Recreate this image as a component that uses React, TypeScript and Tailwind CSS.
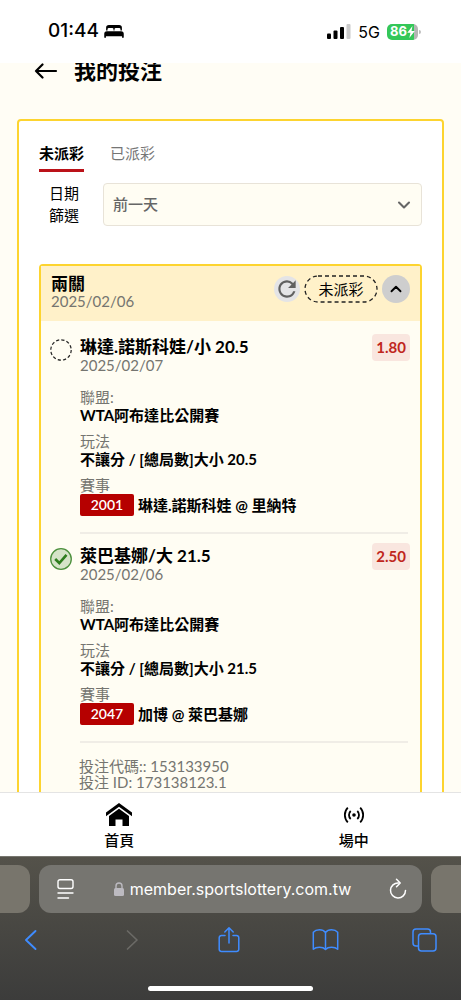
import React, { useState } from 'react';
import { ChevronDown, ChevronUp } from 'lucide-react';
import { MdRefresh } from 'react-icons/md';

interface Pick {
  title: string;
  date: string;
  odds: string;
  won: boolean;
  league: string;
  market: string;
  code: string;
  match: string;
}

const PICKS: Pick[] = [
  {
    title: '琳達.諾斯科娃/小 20.5',
    date: '2025/02/07',
    odds: '1.80',
    won: false,
    league: 'WTA阿布達比公開賽',
    market: '不讓分 / [總局數]大小 20.5',
    code: '2001',
    match: '琳達.諾斯科娃 @ 里納特',
  },
  {
    title: '萊巴基娜/大 21.5',
    date: '2025/02/06',
    odds: '2.50',
    won: true,
    league: 'WTA阿布達比公開賽',
    market: '不讓分 / [總局數]大小 21.5',
    code: '2047',
    match: '加博 @ 萊巴基娜',
  },
];

function StatusBar() {
  return (
    <div className="flex h-[63px] shrink-0 items-center justify-between bg-white pr-10 pl-12 font-[Inter,sans-serif]">
      <div className="flex items-center gap-[5px]">
        <span className="text-[19px] font-medium">01:44</span>
        <svg width="20" height="13" viewBox="0 0 21 14" aria-hidden="true">
          <path d="M2 6V3a3 3 0 0 1 3-3h11a3 3 0 0 1 3 3v3h-1.500V4.800a1.500 1.500 0 0 0-1.500-1.500h-3.500a1.500 1.500 0 0 0-1.500 1.500V6h-1V4.800a1.500 1.500 0 0 0-1.500-1.500H5a1.500 1.500 0 0 0-1.500 1.500V6z" />
          <path d="M0 9.500a2.800 2.800 0 0 1 2.800-2.800h15.400A2.800 2.800 0 0 1 21 9.500V13a.9.900 0 0 1-1.800 0v-.8H1.800v.8A.9.900 0 0 1 0 13z" />
        </svg>
      </div>
      <div className="flex items-center gap-[7px]">
        <svg width="24" height="15" viewBox="0 0 24 15" aria-hidden="true">
          <rect x="0" y="9.500" width="4" height="5.500" rx="1" />
          <rect x="6.500" y="6.500" width="4" height="8.500" rx="1" />
          <rect x="13" y="3" width="4" height="12" rx="1" />
          <rect x="19.500" y="0" width="4" height="15" rx="1" fill="#cacaca" />
        </svg>
        <span className="text-base">5G</span>
        <div className="flex items-center gap-px">
          <div className="flex h-4 w-[31px] items-center justify-center rounded-[5px] bg-linear-to-r from-[#34c759] from-86% to-[#b5b5b5] to-86% text-[13px] font-bold text-white">
            86
            <svg width="8" height="12" viewBox="0 0 8 12" fill="#fff" aria-hidden="true">
              <path d="M5.500 0 .3 6.800h3.200L2.300 12 7.800 5H4.500z" />
            </svg>
          </div>
          <span className="h-1 w-0.5 rounded-r bg-[#bdbdbd]" />
        </div>
      </div>
    </div>
  );
}

function PickIcon({ won }: { won: boolean }) {
  if (won) {
    return (
      <svg width="22" height="22" viewBox="0 0 22 22" fill="none" className="mt-0.5 shrink-0" aria-hidden="true">
        <circle cx="11" cy="11" r="10.300" fill="#d5e3c8" stroke="#4b8f3c" strokeWidth="1.300" />
        <path d="m5.200 11 4.100 4 7.200-8.200" stroke="#2e7d1e" strokeWidth="2.600" />
      </svg>
    );
  }
  return (
    <svg width="22" height="22" viewBox="0 0 22 22" fill="none" className="mt-0.5 shrink-0" aria-hidden="true">
      <circle cx="11" cy="11" r="10.200" stroke="#222" strokeWidth="1.200" strokeDasharray="3.200 2.140" />
    </svg>
  );
}

function PickRow({ pick }: { pick: Pick }) {
  return (
    <li className="flex gap-2 pr-[10px] pl-[9px]">
      <PickIcon won={pick.won} />
      <div className="min-w-0 flex-1">
        <div className="flex items-start justify-between">
          <div>
            <h3 className="text-[17px] leading-5 font-bold">{pick.title}</h3>
            <p className="text-[15px] leading-4 text-[#757570]">{pick.date}</p>
          </div>
          <span className="-mt-[3px] rounded bg-[#f9e6df] px-1 text-[15px] leading-[27px] font-bold text-[#c0261d]">
            {pick.odds}
          </span>
        </div>
        <dl className="mr-0.5 flex flex-col gap-2 border-b-2 border-[#f0ede6] pt-[15px] pb-4 text-[15px] leading-[18px]">
          <div>
            <dt className="text-[#757570]">聯盟:</dt>
            <dd className="font-bold">{pick.league}</dd>
          </div>
          <div>
            <dt className="text-[#757570]">玩法</dt>
            <dd className="font-bold">{pick.market}</dd>
          </div>
          <div>
            <dt className="text-[#757570]">賽事</dt>
            <dd className="flex items-center gap-1 font-bold">
              <span className="w-[54px] rounded-xs bg-[#b60000] text-center text-sm leading-[22px] font-semibold text-white">
                {pick.code}
              </span>
              {pick.match}
            </dd>
          </div>
        </dl>
      </div>
    </li>
  );
}

function BetCard() {
  const [open, setOpen] = useState(true);

  return (
    <article className="rounded border-2 border-[#fdd42f] bg-[#fffdf3]">
      <header className="flex items-start justify-between bg-[#fff1c9] px-[10px] pt-[9px] pb-3">
        <div>
          <h2 className="text-[17px] leading-[18px] font-bold">兩關</h2>
          <p className="text-[15px] leading-4 text-[#757570]">2025/02/06</p>
        </div>
        <div className="flex items-center gap-1">
          <button
            type="button"
            aria-label="重新整理"
            className="flex size-[26px] items-center justify-center rounded-full bg-[#e4e4e6] text-[#606060]"
          >
            <MdRefresh className="size-[26px]" />
          </button>
          <span className="relative flex h-7 w-[74px] items-center justify-center text-[15px]">
            <svg className="absolute inset-0 size-full" fill="none" aria-hidden="true">
              <rect x="1" y="1" width="72" height="26" rx="13" stroke="#222" strokeWidth="1.300" strokeDasharray="4 3" />
            </svg>
            未派彩
          </span>
          <button
            type="button"
            aria-label="收合"
            onClick={() => setOpen(!open)}
            className="flex size-7 items-center justify-center rounded-full bg-[#cecece]"
          >
            <ChevronUp className={open ? 'size-[18px]' : 'size-[18px] rotate-180'} strokeWidth={2.5} />
          </button>
        </div>
      </header>

      {open && (
        <>
          <ul className="flex flex-col gap-3 pt-4">
            {PICKS.map((pick) => (
              <PickRow key={pick.code} pick={pick} />
            ))}
          </ul>
          <div className="pt-[15px] pb-6 pl-[38px] text-[15px] leading-4 text-[#757570]">
            <p>投注代碼:: 153133950</p>
            <p>投注 ID: 173138123.1</p>
          </div>
        </>
      )}
    </article>
  );
}

function TabBar() {
  return (
    <nav className="grid h-16 shrink-0 grid-cols-2 border-t border-[#e4e4e4] bg-white text-[15px] leading-5 font-medium">
      <a href="#home" className="flex flex-col items-center gap-1 pt-2.5 pl-2">
        <svg width="26" height="23" viewBox="0 0 26 23" aria-hidden="true">
          <path d="M13 0 26 9.500v3.800L13 3.800 0 13.300V9.500z" />
          <path d="M13 5.800 23 13v10h-6.500v-6.500h-7V23H3V13z" />
        </svg>
        首頁
      </a>
      <a href="#live" className="flex flex-col items-center gap-1 pt-2.5 pl-4">
        <svg width="22" height="23" viewBox="0 0 22 23" fill="none" stroke="#000" strokeWidth="1.800" aria-hidden="true">
          <circle cx="11" cy="12" r="1.800" fill="#000" stroke="none" />
          <path d="M7.700 8a5.500 5.500 0 0 0 0 8M14.300 8a5.500 5.500 0 0 1 0 8" />
          <path d="M4.800 4.700a10.500 10.500 0 0 0 0 14.600M17.200 4.700a10.500 10.500 0 0 1 0 14.600" />
        </svg>
        場中
      </a>
    </nav>
  );
}

function BrowserBar() {
  return (
    <footer className="flex shrink-0 flex-col border-t border-[#77766f] bg-linear-to-b from-[#54524a] to-[#3c3c3b] font-[Inter,sans-serif] text-white">
      <div className="flex gap-[9px] pt-2">
        <div className="h-12 w-[30px] rounded-r-xl bg-[#78756c]" />
        <div className="flex h-12 flex-1 items-center justify-between rounded-xl bg-[#767570] px-[15px]">
          <button type="button" aria-label="頁面選單">
            <svg width="22" height="22" viewBox="0 0 22 22" fill="none" stroke="#fff" strokeWidth="1.400" strokeLinecap="round" aria-hidden="true">
              <rect x="4" y="1.700" width="15" height="8.800" rx="2" />
              <path d="M4 15h15M4 20h10.500" />
            </svg>
          </button>
          <div className="flex items-center gap-1.5">
            <svg width="10" height="14" viewBox="0 0 10 14" fill="none" aria-hidden="true">
              <rect x="0" y="6" width="10" height="8" rx="1.500" fill="#bcbac0" />
              <path d="M2 7V4a3 3 0 0 1 6 0v3" stroke="#bcbac0" strokeWidth="1.400" />
            </svg>
            <span className="text-base">member.sportslottery.com.tw</span>
          </div>
          <button type="button" aria-label="重新載入">
            <svg width="18" height="22" viewBox="0 0 18 22" fill="none" stroke="#fff" strokeWidth="1.500" strokeLinecap="round" strokeLinejoin="round" aria-hidden="true">
              <path d="M9.500 5A7.500 7.500 0 1 0 16.500 12.500" />
              <path d="m7.500 1.300 3.700 3.700-3.700 3.700" />
            </svg>
          </button>
        </div>
        <div className="h-12 w-[30px] rounded-l-xl bg-[#78756c]" />
      </div>
      <div className="flex items-center justify-between px-6 pt-[13px] pb-8">
        <button type="button" aria-label="上一頁">
          <svg width="13" height="28" viewBox="0 0 13 28" fill="none" stroke="#3f8cff" strokeWidth="1.900" strokeLinecap="round" strokeLinejoin="round" aria-hidden="true">
            <path d="M11.500 5 2 14l9.500 9" />
          </svg>
        </button>
        <button type="button" aria-label="下一頁" disabled className="ml-4">
          <svg width="13" height="28" viewBox="0 0 13 28" fill="none" stroke="#6b6a66" strokeWidth="1.700" strokeLinecap="round" strokeLinejoin="round" aria-hidden="true">
            <path d="M1.500 5 11 14l-9.500 9" />
          </svg>
        </button>
        <button type="button" aria-label="分享" className="ml-1.5">
          <svg width="22" height="28" viewBox="0 0 22 28" fill="none" stroke="#3f8cff" strokeWidth="1.500" strokeLinecap="round" strokeLinejoin="round" aria-hidden="true">
            <path d="M7 9.500H3.500A2.200 2.200 0 0 0 1.200 11.700v11.600a2.200 2.200 0 0 0 2.300 2.200h15a2.200 2.200 0 0 0 2.300-2.200V11.700a2.200 2.200 0 0 0-2.300-2.200H15" />
            <path d="M11 17V2M6.800 6 11 1.800 15.200 6" />
          </svg>
        </button>
        <button type="button" aria-label="書籤">
          <svg width="27" height="28" viewBox="0 0 27 28" fill="none" stroke="#3f8cff" strokeWidth="1.500" strokeLinejoin="round" aria-hidden="true">
            <path d="M13.500 6.500C12 4.500 9.800 3.800 7.500 3.800c-2.500 0-4.700.7-6.200 2.400v17C2.800 21.800 5 21.300 7.500 21.300s4.600.6 6 2.200c1.400-1.600 3.500-2.200 6-2.200s4.700.5 6.200 1.900v-17c-1.500-1.700-3.700-2.400-6.200-2.400-2.300 0-4.500.7-6 2.700zM13.500 6.500v17" />
          </svg>
        </button>
        <button type="button" aria-label="分頁">
          <svg width="25" height="28" viewBox="0 0 25 28" fill="none" stroke="#3f8cff" strokeWidth="1.500" strokeLinejoin="round" aria-hidden="true">
            <rect x="6.500" y="7.800" width="17.500" height="17.200" rx="3" />
            <path d="M6.500 20H4a3 3 0 0 1-3-3V6a3 3 0 0 1 3-3h11.500a3 3 0 0 1 3 3v1.800" />
          </svg>
        </button>
      </div>
      <div className="mx-auto mb-[9px] h-[5px] w-[165px] rounded-full bg-white" />
    </footer>
  );
}

export default function App() {
  const [tab, setTab] = useState<'open' | 'settled'>('open');

  const tabClass = (active: boolean) =>
    active
      ? 'border-b-3 border-[#bb1219] pb-1.5 font-bold'
      : 'border-b-3 border-transparent pb-1.5 text-[#757575]';

  return (
    <div className="flex h-screen flex-col overflow-hidden bg-[#fffdf5] font-[Lato,'Noto_Sans_CJK_TC',sans-serif] text-black">
      <StatusBar />

      <main className="min-h-0 flex-1 overflow-hidden">
        {/* Page title, partly scrolled under the status bar */}
        <div className="-mt-2 flex h-8 items-center gap-4 pl-[34px]">
          <a href="#back" aria-label="返回">
            <svg width="24" height="16" viewBox="0 0 24 16" fill="none" stroke="#000" strokeWidth="2.200" strokeLinecap="round" strokeLinejoin="round" aria-hidden="true">
              <path d="M22 8H2M8.500 1.500 2 8l6.500 6.500" />
            </svg>
          </a>
          <h1 className="text-[22px] leading-8 font-bold">我的投注</h1>
        </div>

        <section className="mx-[17px] mt-8 rounded border-2 border-[#fdd42f] bg-white px-5 pt-[22px] pb-6">
          <div role="tablist" className="flex gap-[26px] text-[15px] leading-5">
            <button
              type="button"
              role="tab"
              aria-selected={tab === 'open'}
              onClick={() => setTab('open')}
              className={tabClass(tab === 'open')}
            >
              未派彩
            </button>
            <button
              type="button"
              role="tab"
              aria-selected={tab === 'settled'}
              onClick={() => setTab('settled')}
              className={tabClass(tab === 'settled')}
            >
              已派彩
            </button>
          </div>

          <div className="mt-[10px] flex items-center">
            <label htmlFor="range" className="ml-[10px] w-8 text-[15px] leading-[22px]">
              日期 篩選
            </label>
            <div className="relative ml-[22px] flex-1">
              <select
                id="range"
                className="h-[43px] w-full appearance-none rounded border border-[#e8e3d8] bg-[#fffdf3] px-[9px] text-[15px] font-medium text-[#666]"
              >
                <option>前一天</option>
              </select>
              <ChevronDown className="pointer-events-none absolute top-3 right-2 size-5 text-[#666]" strokeWidth={2.5} />
            </div>
          </div>

          <div className="mt-[38px]">
            <BetCard />
          </div>
        </section>
      </main>

      <TabBar />
      <BrowserBar />
    </div>
  );
}
